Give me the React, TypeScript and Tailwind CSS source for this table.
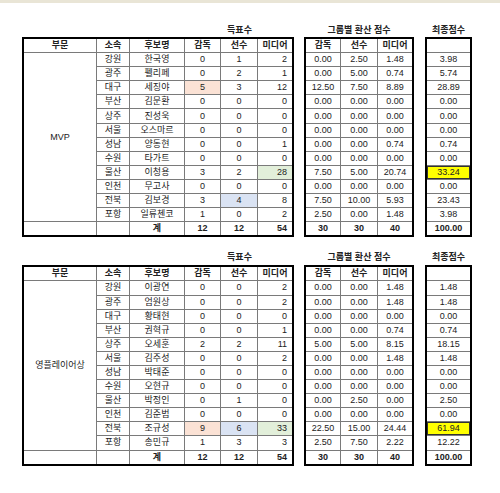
import React from "react";

type Row = {
  team: string;
  name: string;
  votes: [string, string, string];
  scores: [string, string, string];
  total: string;
  hl?: { coach?: boolean; player?: boolean; media?: boolean; total?: boolean };
};

const mvpRows: Row[] = [
  { team: "강원", name: "한국영", votes: ["0", "1", "2"], scores: ["0.00", "2.50", "1.48"], total: "3.98" },
  { team: "광주", name: "펠리페", votes: ["0", "2", "1"], scores: ["0.00", "5.00", "0.74"], total: "5.74" },
  { team: "대구", name: "세징야", votes: ["5", "3", "12"], scores: ["12.50", "7.50", "8.89"], total: "28.89", hl: { coach: true } },
  { team: "부산", name: "김문환", votes: ["0", "0", "0"], scores: ["0.00", "0.00", "0.00"], total: "0.00" },
  { team: "상주", name: "진성욱", votes: ["0", "0", "0"], scores: ["0.00", "0.00", "0.00"], total: "0.00" },
  { team: "서울", name: "오스마르", votes: ["0", "0", "0"], scores: ["0.00", "0.00", "0.00"], total: "0.00" },
  { team: "성남", name: "양동현", votes: ["0", "0", "1"], scores: ["0.00", "0.00", "0.74"], total: "0.74" },
  { team: "수원", name: "타가트", votes: ["0", "0", "0"], scores: ["0.00", "0.00", "0.00"], total: "0.00" },
  { team: "울산", name: "이청용", votes: ["3", "2", "28"], scores: ["7.50", "5.00", "20.74"], total: "33.24", hl: { media: true, total: true } },
  { team: "인천", name: "무고사", votes: ["0", "0", "0"], scores: ["0.00", "0.00", "0.00"], total: "0.00" },
  { team: "전북", name: "김보경", votes: ["3", "4", "8"], scores: ["7.50", "10.00", "5.93"], total: "23.43", hl: { player: true } },
  { team: "포항", name: "일류첸코", votes: ["1", "0", "2"], scores: ["2.50", "0.00", "1.48"], total: "3.98" },
];

const youngRows: Row[] = [
  { team: "강원", name: "이광연", votes: ["0", "0", "2"], scores: ["0.00", "0.00", "1.48"], total: "1.48" },
  { team: "광주", name: "엄원상", votes: ["0", "0", "2"], scores: ["0.00", "0.00", "1.48"], total: "1.48" },
  { team: "대구", name: "황태현", votes: ["0", "0", "0"], scores: ["0.00", "0.00", "0.00"], total: "0.00" },
  { team: "부산", name: "권혁규", votes: ["0", "0", "1"], scores: ["0.00", "0.00", "0.74"], total: "0.74" },
  { team: "상주", name: "오세훈", votes: ["2", "2", "11"], scores: ["5.00", "5.00", "8.15"], total: "18.15" },
  { team: "서울", name: "김주성", votes: ["0", "0", "2"], scores: ["0.00", "0.00", "1.48"], total: "1.48" },
  { team: "성남", name: "박태준", votes: ["0", "0", "0"], scores: ["0.00", "0.00", "0.00"], total: "0.00" },
  { team: "수원", name: "오현규", votes: ["0", "0", "0"], scores: ["0.00", "0.00", "0.00"], total: "0.00" },
  { team: "울산", name: "박정인", votes: ["0", "1", "0"], scores: ["0.00", "2.50", "0.00"], total: "2.50" },
  { team: "인천", name: "김준범", votes: ["0", "0", "0"], scores: ["0.00", "0.00", "0.00"], total: "0.00" },
  { team: "전북", name: "조규성", votes: ["9", "6", "33"], scores: ["22.50", "15.00", "24.44"], total: "61.94", hl: { coach: true, player: true, media: true, total: true } },
  { team: "포항", name: "송민규", votes: ["1", "3", "3"], scores: ["2.50", "7.50", "2.22"], total: "12.22" },
];

const Cell = ({
  children,
  right,
  bold,
  bg = "bg-white",
  extra = "",
}: {
  children?: React.ReactNode;
  right?: boolean;
  bold?: boolean;
  bg?: string;
  extra?: string;
}) => (
  <div
    className={`flex items-center ${right ? "justify-end pr-[5px]" : "justify-center"} ${bold ? "font-bold" : ""} ${bg} ${extra}`}
  >
    {children}
  </div>
);

function Section({ label, rows, last }: { label: string; rows: Row[]; last?: boolean }) {
  return (
    <div className={last ? "mt-[14px]" : "mt-[21px]"}>
      <div className="flex pl-[22px] text-[9px] leading-[12px] font-bold text-[#222]">
        <div className="w-[272px] pl-[163px] text-center">득표수</div>
        <div className="ml-[10px] w-[110px] text-center">그룹별 환산 점수</div>
        <div className="ml-[11px] w-[47px] text-center">최종점수</div>
      </div>
      <div className={`flex pl-[22px] ${last ? "mt-[2px]" : "mt-[1px]"}`}>
        {/* votes */}
        <div className="w-[272px] border-2 border-black bg-[#7a7a7a] grid grid-cols-[72px_32px_54px_35px_36px_34px] grid-rows-[repeat(14,13.1px)] gap-px">
          <Cell extra="col-start-1 row-start-2 row-span-12">{label}</Cell>
          <Cell bold>부문</Cell>
          <Cell bold>소속</Cell>
          <Cell bold>후보명</Cell>
          <Cell bold>감독</Cell>
          <Cell bold>선수</Cell>
          <Cell bold>미디어</Cell>
          {rows.map((r) => (
            <React.Fragment key={r.name}>
              <Cell>{r.team}</Cell>
              <Cell>{r.name}</Cell>
              <Cell bg={r.hl?.coach ? "bg-[#fbe2d5]" : "bg-white"}>{r.votes[0]}</Cell>
              <Cell bg={r.hl?.player ? "bg-[#dae3f3]" : "bg-white"}>{r.votes[1]}</Cell>
              <Cell right bg={r.hl?.media ? "bg-[#e2efda]" : "bg-white"}>{r.votes[2]}</Cell>
            </React.Fragment>
          ))}
          <Cell />
          <Cell />
          <Cell bold>계</Cell>
          <Cell bold>12</Cell>
          <Cell bold>12</Cell>
          <Cell bold right>54</Cell>
        </div>
        {/* group scores */}
        <div className="ml-[10px] w-[110px] border-2 border-black bg-[#7a7a7a] grid grid-cols-[34px_36px_34px] grid-rows-[repeat(14,13.1px)] gap-px">
          <Cell bold>감독</Cell>
          <Cell bold>선수</Cell>
          <Cell bold>미디어</Cell>
          {rows.map((r) => (
            <React.Fragment key={r.name}>
              <Cell>{r.scores[0]}</Cell>
              <Cell>{r.scores[1]}</Cell>
              <Cell>{r.scores[2]}</Cell>
            </React.Fragment>
          ))}
          <Cell bold>30</Cell>
          <Cell bold>30</Cell>
          <Cell bold>40</Cell>
        </div>
        {/* final */}
        <div className="ml-[11px] w-[47px] border-2 border-black bg-[#7a7a7a] grid grid-cols-[43px] grid-rows-[repeat(14,13.1px)] gap-px">
          <Cell />
          {rows.map((r) => (
            <Cell
              key={r.name}
              bg={r.hl?.total ? "bg-[#ffff00]" : "bg-white"}
              extra={r.hl?.total ? "outline outline-1 outline-[#333] -outline-offset-1" : ""}
            >
              {r.total}
            </Cell>
          ))}
          <Cell bold>100.00</Cell>
        </div>
      </div>
    </div>
  );
}

export default function App() {
  return (
    <div
      className="w-[500px] h-[493px] bg-white text-[9px] leading-none text-[#222] overflow-hidden"
      style={{ fontFamily: '"Liberation Sans", "Noto Sans CJK KR", sans-serif' }}
    >
      <div className="h-[3px] bg-[#e9e5d6]" />
      <Section label="MVP" rows={mvpRows} />
      <Section label="영플레이어상" rows={youngRows} last />
    </div>
  );
}
